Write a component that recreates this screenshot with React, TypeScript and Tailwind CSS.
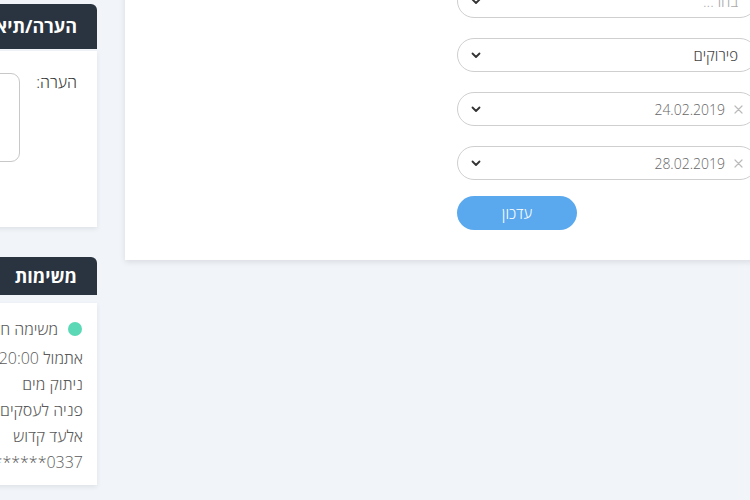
import React from "react";

const Chevron = () => (
  <svg width="10" height="7" viewBox="0 0 10 7" fill="none">
    <path d="M1.5 1.5 L5 5 L8.5 1.5" stroke="#333" strokeWidth="1.8" strokeLinecap="round" strokeLinejoin="round" />
  </svg>
);

const Clear = () => (
  <svg width="9" height="9" viewBox="0 0 9 9" fill="none">
    <path d="M1 1 L8 8 M8 1 L1 8" stroke="#bbb" strokeWidth="1.2" strokeLinecap="round" />
  </svg>
);

function Select({ text, clear, placeholder }: { text: string; clear?: boolean; placeholder?: boolean }) {
  return (
    <div className="w-[300px] h-[34px] shrink-0 rounded-full border border-[#cfcfcf] bg-white flex items-center pr-[13px] pl-[13px]">
      {clear && (
        <span className="ml-[9px] flex items-center">
          <Clear />
        </span>
      )}
      <span
        className={
          placeholder
            ? "mr-[5px] text-[15px] text-[#aaa] font-light"
            : clear
            ? "text-[14px] text-[#666] font-light"
            : "mr-[5px] text-[15px] text-[#444] font-light"
        }
      >
        {text}
      </span>
      <span className="mr-auto flex items-center">
        <Chevron />
      </span>
    </div>
  );
}

export default function App() {
  return (
    <div
      className="w-[750px] h-[500px] overflow-hidden bg-[#f1f4f8] flex items-start"
      dir="ltr"
      style={{ fontFamily: "'Open Sans', 'Noto Sans', 'DejaVu Sans', sans-serif" }}
    >
      {/* left column */}
      <div className="w-[240px] shrink-0 ml-[-143px] pt-[4px] flex flex-col" dir="rtl">
        <div className="h-[45px] bg-[#2a3441] rounded-tr-[6px] flex items-center pr-[20px]">
          <span className="text-white font-bold text-[18px]">הערה/תיאור</span>
        </div>
        <div className="mt-[2px] h-[176px] bg-white shadow-[0_2px_5px_rgba(0,0,0,0.08)] flex items-start pr-[20px] pt-[22px]">
          <span className="w-[40px] text-[16px] text-[#333] font-light leading-[18px] text-right">הערה:</span>
          <div className="mr-[17px] w-[170px] h-[89px] rounded-[9px] border border-[#c8c8c8] bg-white" />
        </div>

        <div className="mt-[30px] h-[38px] bg-[#2a3441] rounded-tr-[6px] flex items-center pr-[20px]">
          <span className="text-white font-bold text-[18px]">משימות</span>
        </div>
        <div className="mt-[8px] h-[182px] bg-white shadow-[0_2px_5px_rgba(0,0,0,0.08)] flex flex-col pt-[13px] pr-[14px] text-[16px] text-[#5a5a5a] font-light">
          <div className="h-[29px] flex items-center pb-[3px]">
            <span className="w-[14px] h-[14px] rounded-full bg-[#5bd9b6] mr-[1px] ml-[10px]" />
            <span>משימה חדשה</span>
          </div>
          <div className="h-[26px] flex items-center">אתמול 20:00</div>
          <div className="h-[26px] flex items-center">ניתוק מים</div>
          <div className="h-[26px] flex items-center">פניה לעסקים</div>
          <div className="h-[26px] flex items-center">אלעד קדוש</div>
          <div className="h-[26px] flex items-center">0337********</div>
        </div>
      </div>

      {/* main card */}
      <div className="ml-[28px] w-[700px] shrink-0 mt-[-60px] bg-white shadow-[0_2px_6px_rgba(0,0,0,0.1)] pl-[332px] pt-[44px] pb-[30px] flex flex-col gap-[20px]" dir="ltr">
        <div dir="rtl" className="w-[300px] flex flex-col gap-[20px]">
          <Select text="בחר..." placeholder />
          <Select text="פירוקים" />
          <Select text="24.02.2019" clear />
          <Select text="28.02.2019" clear />
        </div>
        <button className="-mt-[4px] w-[120px] h-[34px] rounded-full bg-[#5aa9ee] text-white text-[15px] font-light flex items-center justify-center">
          עדכון
        </button>
      </div>
    </div>
  );
}
